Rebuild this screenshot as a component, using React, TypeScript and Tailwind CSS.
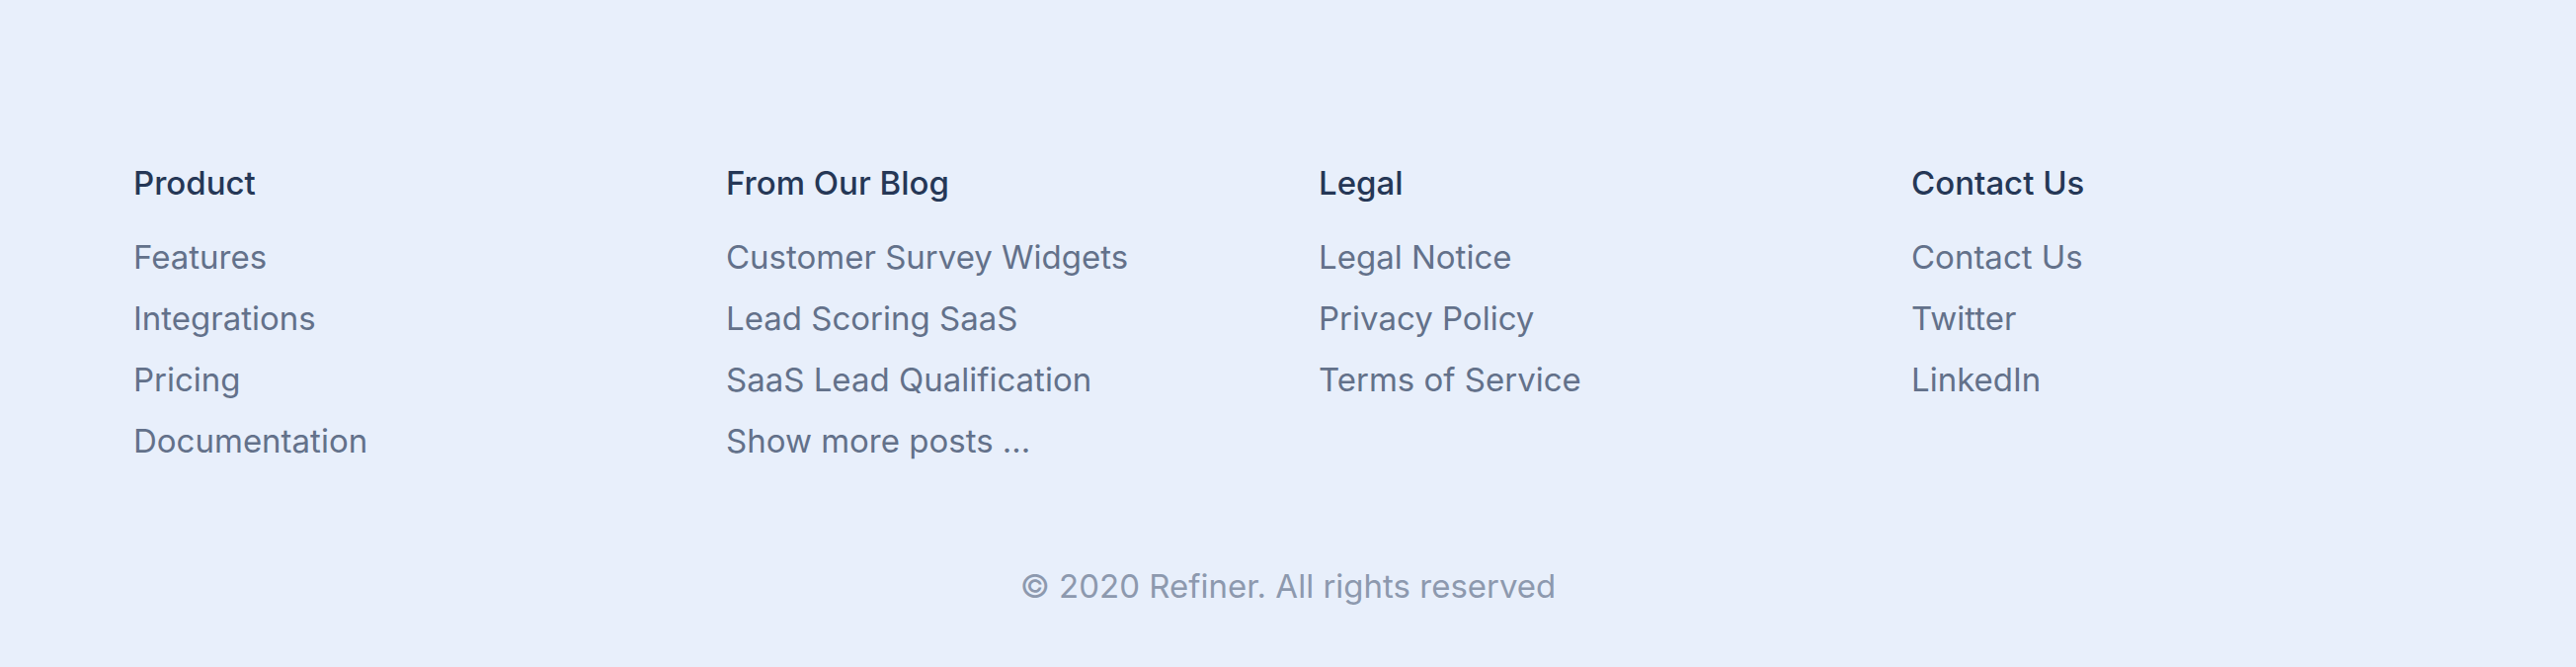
const columns = [
  {
    title: "Product",
    links: ["Features", "Integrations", "Pricing", "Documentation"],
  },
  {
    title: "From Our Blog",
    links: [
      "Customer Survey Widgets",
      "Lead Scoring SaaS",
      "SaaS Lead Qualification",
      "Show more posts ...",
    ],
  },
  {
    title: "Legal",
    links: ["Legal Notice", "Privacy Policy", "Terms of Service"],
  },
  {
    title: "Contact Us",
    links: ["Contact Us", "Twitter", "LinkedIn"],
  },
];

export default function App() {
  return (
    <footer
      className="min-h-[675px] bg-[#e8effb] pt-[165px] pb-[63px]"
      style={{ fontFamily: "Inter, 'Noto Sans', sans-serif" }}
    >
      <div className="mx-auto grid w-[2338px] grid-cols-4 gap-x-[62px]">
        {columns.map((col) => (
          <div key={col.title}>
            <h4 className="text-[33px] leading-[40px] font-medium text-[#253756]">
              {col.title}
            </h4>
            <ul className="mt-[24px]">
              {col.links.map((link) => (
                <li key={link} className="text-[33px] leading-[62px] text-[#63718a]">
                  <a href="#">{link}</a>
                </li>
              ))}
            </ul>
          </div>
        ))}
      </div>
      <p className="mt-[96px] text-center text-[33px] leading-[40px] text-[#8d99ae]">
        © 2020 Refiner. All rights reserved
      </p>
    </footer>
  );
}
